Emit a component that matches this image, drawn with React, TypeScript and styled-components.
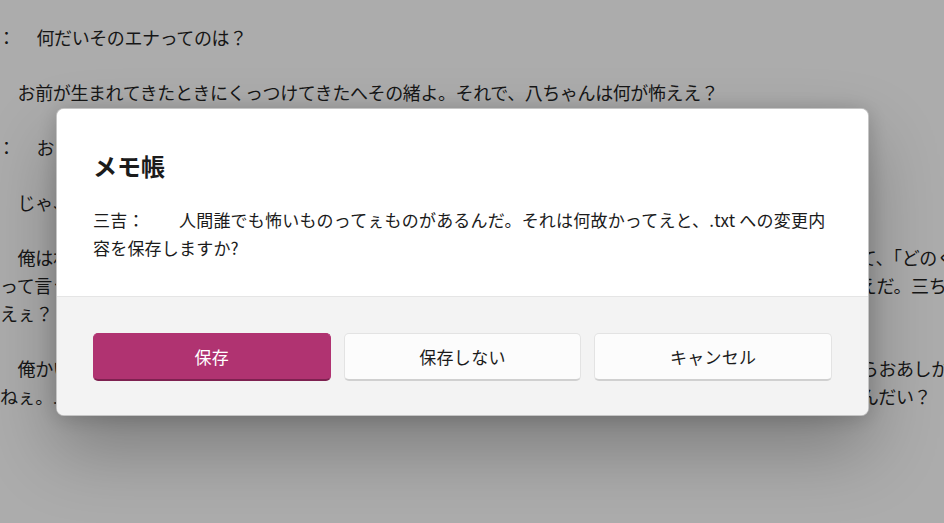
import styled, { createGlobalStyle } from "styled-components"

const GlobalStyle = createGlobalStyle`
    html, body {
        margin: 0;
        padding: 0;
        width: 100%;
        height: 100%;
        overflow: hidden;
        background: #acacac;
    }
    * {
        box-sizing: border-box;
    }
`

const FONT = `"Noto Sans CJK JP", "Noto Sans", "Liberation Sans", sans-serif`

const Page = styled.div`
    width: 944px;
    height: 523px;
    padding-top: 23px;
    font-family: ${FONT};
    font-size: 18px;
    letter-spacing: -0.4px;
    line-height: 28px;
    color: #161616;
    overflow: hidden;
`

const Para = styled.div`
    margin-bottom: 27px;
`

const Line = styled.div<{ $hang?: boolean }>`
    white-space: nowrap;
    margin-left: ${(p) => (p.$hang ? "-20px" : "0")};
`

const Overlay = styled.div`
    position: fixed;
    inset: 0;
    display: flex;
    align-items: center;
    justify-content: flex-start;
    padding-left: 56px;
`

const Dialog = styled.div`
    width: 813px;
    height: 308px;
    display: flex;
    flex-direction: column;
    border-radius: 8px;
    border: 1px solid rgba(90, 90, 90, 0.35);
    background: #ffffff;
    overflow: hidden;
    box-shadow: 0 34px 70px rgba(0, 0, 0, 0.27), 0 2px 21px rgba(0, 0, 0, 0.18);
    font-family: ${FONT};
    color: #1b1b1b;
`

const Content = styled.div`
    padding: 35px 36px 34px 36px;
    background: #ffffff;
`

const Title = styled.div`
    font-size: 24px;
    font-weight: 700;
    line-height: 44px;
    margin-bottom: 18px;
`

const Message = styled.div`
    font-size: 17px;
    line-height: 28px;
    letter-spacing: 0.2px;
    height: 56px;
`

const Footer = styled.div`
    flex: 1;
    display: grid;
    grid-template-columns: repeat(3, 1fr);
    gap: 13px;
    align-content: start;
    padding: 36px 36px 0 36px;
    background: #f3f3f3;
    border-top: 1px solid #e5e5e5;
`

const Button = styled.button<{ $primary?: boolean }>`
    height: 48px;
    border-radius: 5px;
    font-family: ${FONT};
    font-size: 17px;
    letter-spacing: 0.3px;
    cursor: pointer;
    color: ${(p) => (p.$primary ? "#ffffff" : "#1b1b1b")};
    background: ${(p) => (p.$primary ? "#b03371" : "#fcfcfc")};
    border: 1px solid ${(p) => (p.$primary ? "#b03371" : "#e3e3e3")};
    border-bottom: 2px solid ${(p) => (p.$primary ? "#7e2150" : "#d0d0d0")};
`

export default function App() {
    return (
        <>
            <GlobalStyle />
            <Page>
                <Para>
                    <Line $hang>八：　 何だいそのエナってのは？</Line>
                </Para>
                <Para>
                    <Line>　お前が生まれてきたときにくっつけてきたへその緒よ。それで、八ちゃんは何が怖ええ？</Line>
                </Para>
                <Para>
                    <Line $hang>八：　 おいらかい？　おいらは別に怖えもんなんざねえよ。</Line>
                </Para>
                <Para>
                    <Line>　じゃ、順番に聞いていこうじゃねえか。</Line>
                </Para>
                <Para>
                    <Line>　俺はね、蛇が怖くってしょうがねえんだ。長いのがにょろにょろ這ってるのを見ると、体中の毛がぞっとして、「どのくらい怖いんだ」</Line>
                    <Line>って言うから、俺あ正直に言ってやったのよ。そしたら皆げらげら笑いやがって、ちっとも分かっちゃくれねえだ。三ちゃんは何が怖</Line>
                    <Line>えぇ？</Line>
                </Para>
                <Para>
                    <Line>　俺かい？　俺はね、何が怖いってえと、そりゃ財布が軽くなるのが一番怖え。気がつきゃいつの間にか懐からおあしが消えちまう</Line>
                    <Line>ねぇ。ムカデだのゲジゲジだのってな話じゃねえよ。で、三ちゃんよ、お前さんの本当に一番怖えもんは何なんだい？</Line>
                </Para>
            </Page>
            <Overlay>
                <Dialog role="dialog">
                    <Content>
                        <Title>メモ帳</Title>
                        <Message>
                            三吉：　　人間誰でも怖いものってぇものがあるんだ。それは何故かってえと、.txt への変更内容を保存しますか?
                        </Message>
                    </Content>
                    <Footer>
                        <Button $primary>保存</Button>
                        <Button>保存しない</Button>
                        <Button>キャンセル</Button>
                    </Footer>
                </Dialog>
            </Overlay>
        </>
    )
}
